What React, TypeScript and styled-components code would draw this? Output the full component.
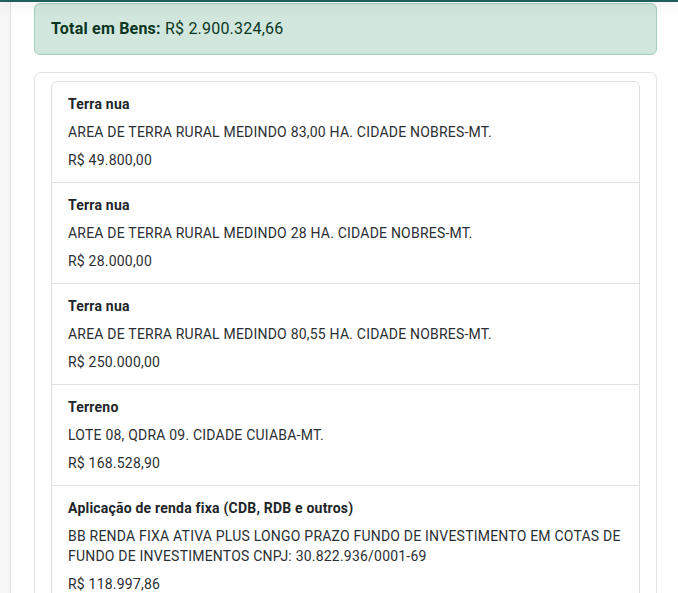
import React from "react";
import styled, { createGlobalStyle } from "styled-components";

const GlobalStyle = createGlobalStyle`
  html, body { margin: 0; padding: 0; background: #ffffff; }
  body {
    font-family: Roboto, "Noto Sans", "Liberation Sans", Arial, sans-serif;
    color: #212529;
    letter-spacing: 0.21px;
    -webkit-font-smoothing: antialiased;
  }
  * { box-sizing: border-box; }
`;

const TopBar = styled.div`
  position: relative;
  z-index: 5;
  height: 2px;
  background: #1e5f5b;
  box-shadow: 0 1px 14px rgba(0, 0, 0, 0.28);
`;

const Shell = styled.div`
  display: flex;
  min-height: 700px;
`;

const Gutter = styled.div`
  width: 11px;
  flex: none;
  background: #f6f6f6;
  border-right: 1px solid #e2e2e2;
`;

const Main = styled.main`
  flex: 1;
  padding: 1px 21px 24px 23px;
  display: flex;
  flex-direction: column;
  gap: 17px;
`;

const Alert = styled.div`
  background: #d1e7dd;
  border: 1px solid #a3cfbb;
  border-radius: 6px;
  color: #0a3622;
  font-size: 16px;
  line-height: 24px;
  padding: 13px 16px;
`;

const Strong = styled.strong`
  font-weight: 700;
`;

const Card = styled.section`
  border: 1px solid #e3e3e3;
  border-radius: 7px;
  padding: 8px 16px 16px;
`;

const List = styled.ul`
  list-style: none;
  margin: 0;
  padding: 0;
  border: 1px solid #dee2e6;
  border-radius: 6px;
`;

const Item = styled.li`
  padding: 12px 12px 12px 16px;
  font-size: 14px;
  line-height: 20px;
  display: flex;
  flex-direction: column;
  gap: 8px;
  & + & {
    border-top: 1px solid #dee2e6;
  }
`;

const Title = styled.div`
  font-weight: 700;
  color: #212529;
`;

const Text = styled.div`
  color: #2b2f33;
`;

type Bem = { tipo: string; descricao: string; valor: string };

const bens: Bem[] = [
  {
    tipo: "Terra nua",
    descricao: "AREA DE TERRA RURAL MEDINDO 83,00 HA. CIDADE NOBRES-MT.",
    valor: "R$ 49.800,00",
  },
  {
    tipo: "Terra nua",
    descricao: "AREA DE TERRA RURAL MEDINDO 28 HA. CIDADE NOBRES-MT.",
    valor: "R$ 28.000,00",
  },
  {
    tipo: "Terra nua",
    descricao: "AREA DE TERRA RURAL MEDINDO 80,55 HA. CIDADE NOBRES-MT.",
    valor: "R$ 250.000,00",
  },
  {
    tipo: "Terreno",
    descricao: "LOTE 08, QDRA 09. CIDADE CUIABA-MT.",
    valor: "R$ 168.528,90",
  },
  {
    tipo: "Aplicação de renda fixa (CDB, RDB e outros)",
    descricao:
      "BB RENDA FIXA ATIVA PLUS LONGO PRAZO FUNDO DE INVESTIMENTO EM COTAS DE FUNDO DE INVESTIMENTOS CNPJ: 30.822.936/0001-69",
    valor: "R$ 118.997,86",
  },
];

export default function App() {
  return (
    <>
      <GlobalStyle />
      <TopBar />
      <Shell>
        <Gutter />
        <Main>
          <Alert>
            <Strong>Total em Bens:</Strong> R$ 2.900.324,66
          </Alert>
          <Card>
            <List>
              {bens.map((b, i) => (
                <Item key={i}>
                  <Title>{b.tipo}</Title>
                  <Text>{b.descricao}</Text>
                  <Text>{b.valor}</Text>
                </Item>
              ))}
            </List>
          </Card>
        </Main>
      </Shell>
    </>
  );
}
